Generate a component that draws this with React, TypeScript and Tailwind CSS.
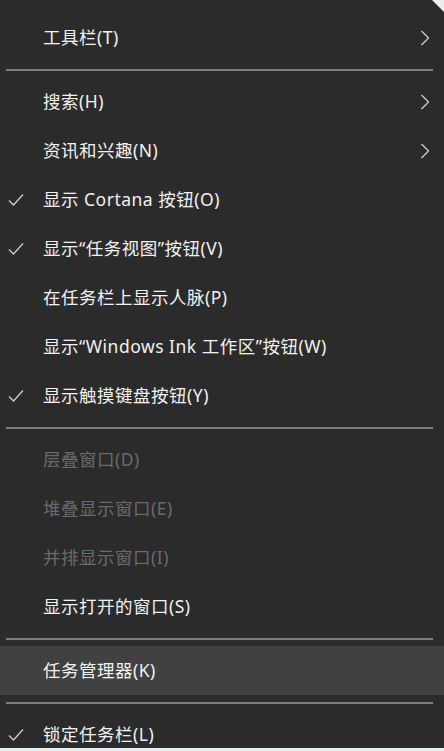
import React from "react";

type Item =
  | { type: "sep" }
  | { type: "item"; label: string; check?: boolean; sub?: boolean; disabled?: boolean; hover?: boolean };

const items: Item[] = [
  { type: "item", label: "工具栏(T)", sub: true },
  { type: "sep" },
  { type: "item", label: "搜索(H)", sub: true },
  { type: "item", label: "资讯和兴趣(N)", sub: true },
  { type: "item", label: "显示 Cortana 按钮(O)", check: true },
  { type: "item", label: "显示“任务视图”按钮(V)", check: true },
  { type: "item", label: "在任务栏上显示人脉(P)" },
  { type: "item", label: "显示“Windows Ink 工作区”按钮(W)" },
  { type: "item", label: "显示触摸键盘按钮(Y)", check: true },
  { type: "sep" },
  { type: "item", label: "层叠窗口(D)", disabled: true },
  { type: "item", label: "堆叠显示窗口(E)", disabled: true },
  { type: "item", label: "并排显示窗口(I)", disabled: true },
  { type: "item", label: "显示打开的窗口(S)" },
  { type: "sep" },
  { type: "item", label: "任务管理器(K)", hover: true },
  { type: "sep" },
  { type: "item", label: "锁定任务栏(L)", check: true },
];

function Check() {
  return (
    <svg width="16" height="14" viewBox="0 0 16 14" fill="none">
      <polyline points="1,7.5 5.5,12 15,1.5" stroke="#cfcfcf" strokeWidth="1.3" />
    </svg>
  );
}

function Chevron() {
  return (
    <svg width="10" height="16" viewBox="0 0 10 16" fill="none">
      <polyline points="1.5,1 8.5,8 1.5,15" stroke="#c8c8c8" strokeWidth="1.4" />
    </svg>
  );
}

export default function App() {
  return (
    <div
      className="w-[444px] h-[751px] bg-[#e9eef0] overflow-hidden"
      style={{ fontFamily: '"Noto Sans", "Noto Sans CJK SC", sans-serif' }}
    >
      <div
        className="h-[748px] bg-[#2b2b2b] pt-[13px] overflow-hidden"
        style={{ clipPath: "polygon(0 0, 432px 0, 444px 12px, 444px 100%, 0 100%)" }}
      >
        {items.map((it, i) =>
          it.type === "sep" ? (
            <div key={i} className="h-[15px] flex items-center px-[6px]">
              <div className="h-[2px] w-[427px] bg-[#7d7d7d]" />
            </div>
          ) : (
            <div
              key={i}
              className={`h-[49px] flex items-center ${it.hover ? "bg-[#414141]" : ""} ${
                it.disabled ? "text-[#6a6a6a]" : "text-[#f2f2f2]"
              }`}
            >
              <div className="w-[43px] flex justify-center pl-[1px] pr-[12px]">{it.check ? <Check /> : null}</div>
              <div className="flex-1 text-[17.5px] leading-none tracking-[0.5px] whitespace-nowrap">{it.label}</div>
              <div className="w-[24px] pr-[14px] flex justify-end">{it.sub ? <Chevron /> : null}</div>
            </div>
          )
        )}
      </div>
    </div>
  );
}
